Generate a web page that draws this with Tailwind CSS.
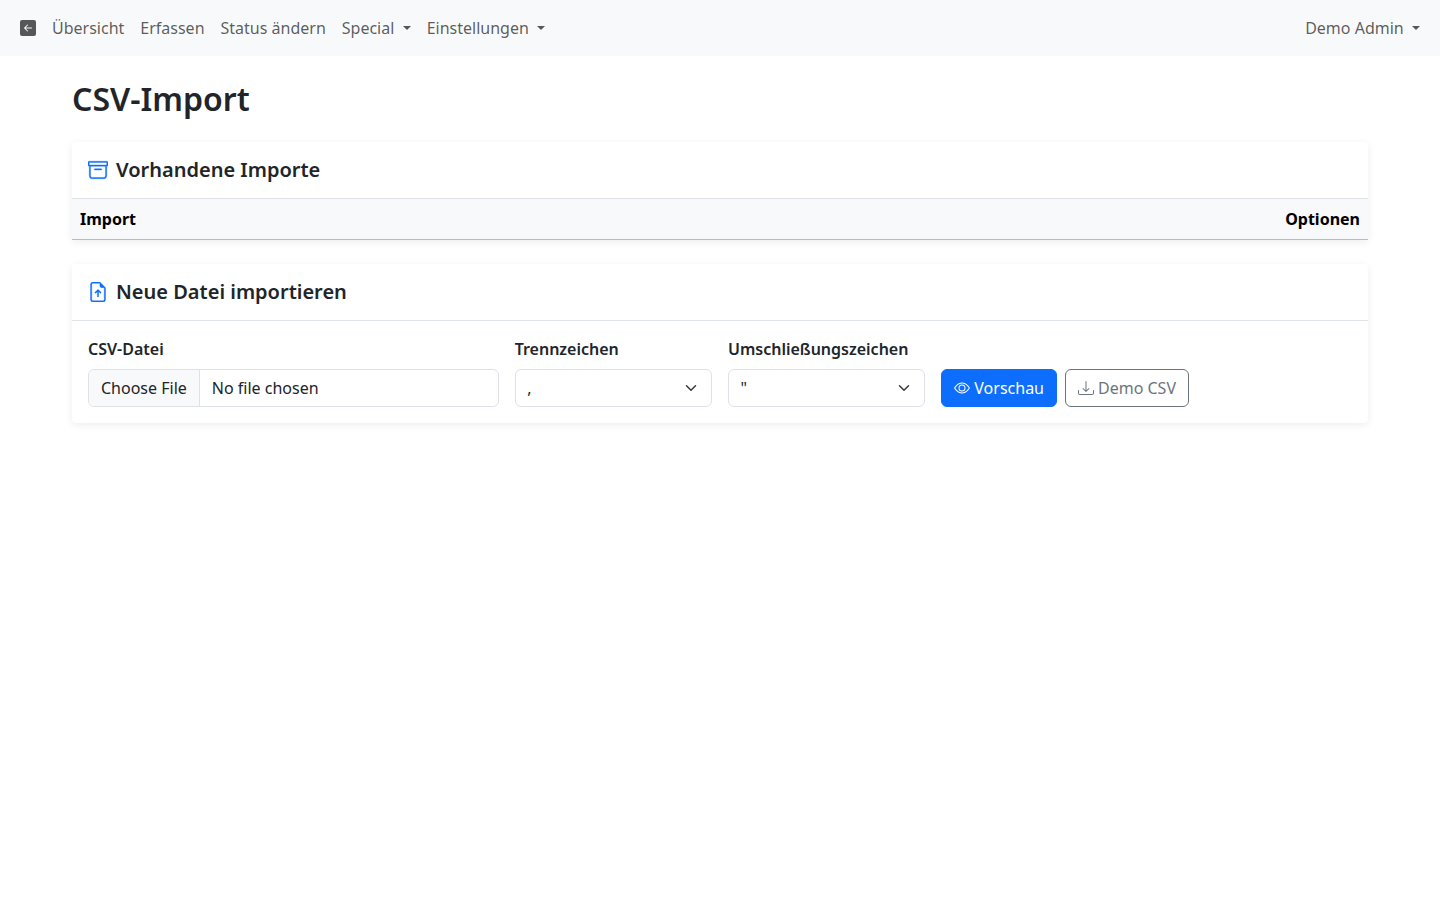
<!DOCTYPE html>
<html lang="de">
<head>
  <meta charset="UTF-8" />
  <meta name="viewport" content="width=device-width, initial-scale=1.0" />
  <title>CSV-Import</title>
  <script src="https://cdn.jsdelivr.net/npm/@tailwindcss/browser@4"></script>
</head>
<body class="bg-white text-[#212529] text-base leading-6 font-['Noto_Sans',sans-serif]">
  <nav class="flex items-center justify-between h-14 px-5 bg-[#f8f9fa] text-black/65">
    <div class="flex items-center">
      <a href="#" class="mr-4">
        <svg class="w-4 h-4" viewBox="0 0 16 16" fill="currentColor"><path d="M16 14a2 2 0 0 1-2 2H2a2 2 0 0 1-2-2V2a2 2 0 0 1 2-2h12a2 2 0 0 1 2 2v12zm-4.5-6.5H5.707l2.147-2.146a.5.5 0 1 0-.708-.708l-3 3a.5.5 0 0 0 0 .708l3 3a.5.5 0 0 0 .708-.708L5.707 8.5H11.5a.5.5 0 0 0 0-1z"/></svg>
      </a>
      <div class="flex items-center gap-4">
        <a href="#">Übersicht</a>
        <a href="#">Erfassen</a>
        <a href="#">Status ändern</a>
        <a href="#" class="flex items-center">Special<span class="ml-[8.3px] border-x-[4.8px] border-t-[4.8px] border-x-transparent border-t-current"></span></a>
        <a href="#" class="flex items-center">Einstellungen<span class="ml-[8.3px] border-x-[4.8px] border-t-[4.8px] border-x-transparent border-t-current"></span></a>
      </div>
    </div>
    <a href="#" class="flex items-center">Demo Admin<span class="ml-[8.3px] border-x-[4.8px] border-t-[4.8px] border-x-transparent border-t-current"></span></a>
  </nav>

  <main class="w-[1296px] mx-auto pb-6">
    <h1 class="mt-6 mb-6 text-[32px] leading-[38px] font-semibold">CSV-Import</h1>

    <section class="rounded-t shadow-[0_2px_8px_rgba(0,0,0,0.075)] mb-6">
      <h5 class="flex items-center gap-2 h-14 px-4 text-xl font-semibold">
        <svg class="w-5 h-5 text-[#0d6efd]" viewBox="0 0 16 16" fill="currentColor" stroke="currentColor" stroke-width="0.3"><path d="M0 2a1 1 0 0 1 1-1h14a1 1 0 0 1 1 1v2a1 1 0 0 1-1 1v7.5a2.5 2.5 0 0 1-2.5 2.5h-9A2.5 2.5 0 0 1 1 12.5V5a1 1 0 0 1-1-1V2zm2 3v7.5A1.5 1.5 0 0 0 3.5 14h9a1.5 1.5 0 0 0 1.5-1.5V5H2zm13-3H1v2h14V2zM5 7.5a.5.5 0 0 1 .5-.5h5a.5.5 0 0 1 0 1h-5a.5.5 0 0 1-.5-.5z"/></svg>
        Vorhandene Importe
      </h5>
      <div class="flex justify-between px-2 py-2 bg-[#f8f9fa] border-t border-[#dee2e6] border-b border-b-[#b8bcc0] font-bold text-black">
        <span>Import</span>
        <span>Optionen</span>
      </div>
    </section>

    <section class="rounded shadow-[0_2px_8px_rgba(0,0,0,0.075)]">
      <h5 class="flex items-center gap-2 h-[57px] px-4 text-xl font-semibold border-b border-[#dee2e6]">
        <svg class="w-5 h-5 text-[#0d6efd]" viewBox="0 0 16 16" fill="currentColor" stroke="currentColor" stroke-width="0.3"><path d="M8.5 11.5a.5.5 0 0 1-1 0V7.707L6.354 8.854a.5.5 0 1 1-.708-.708l2-2a.5.5 0 0 1 .708 0l2 2a.5.5 0 0 1-.708.708L8.5 7.707V11.5z"/><path d="M14 14V4.5L9.5 0H4a2 2 0 0 0-2 2v12a2 2 0 0 0 2 2h8a2 2 0 0 0 2-2zM9.5 3A1.5 1.5 0 0 0 11 4.5h2V14a1 1 0 0 1-1 1H4a1 1 0 0 1-1-1V2a1 1 0 0 1 1-1h5.5v2z"/></svg>
        Neue Datei importieren
      </h5>
      <form class="grid grid-cols-12 gap-4 items-end p-4">
        <div class="col-span-4">
          <label class="block mb-2 font-semibold">CSV-Datei</label>
          <input type="file" class="block w-full h-[38px] border border-[#dee2e6] rounded-md overflow-hidden file:h-[38px] file:-mt-px file:mr-3 file:px-3 file:bg-[#f8f9fa] file:border-0 file:border-r file:border-solid file:border-[#dee2e6] file:text-[#212529]" />
        </div>
        <div class="col-span-2">
          <label class="block mb-2 font-semibold">Trennzeichen</label>
          <div class="relative">
            <select class="block w-full h-[38px] pl-[11.5px] pr-9 border border-[#dee2e6] rounded-md bg-white appearance-none">
              <option>,</option>
            </select>
            <svg class="absolute right-[13px] top-[13px] w-4 h-3 pointer-events-none" viewBox="0 0 16 16" fill="none" stroke="#343a40" stroke-width="2" stroke-linecap="round" stroke-linejoin="round"><path d="m2 5 6 6 6-6"/></svg>
          </div>
        </div>
        <div class="col-span-2">
          <label class="block mb-2 font-semibold">Umschließungszeichen</label>
          <div class="relative">
            <select class="block w-full h-[38px] pl-[11.5px] pr-9 border border-[#dee2e6] rounded-md bg-white appearance-none">
              <option>"</option>
            </select>
            <svg class="absolute right-[13px] top-[13px] w-4 h-3 pointer-events-none" viewBox="0 0 16 16" fill="none" stroke="#343a40" stroke-width="2" stroke-linecap="round" stroke-linejoin="round"><path d="m2 5 6 6 6-6"/></svg>
          </div>
        </div>
        <div class="col-span-4 flex gap-2">
          <button type="button" class="flex items-center gap-1 h-[38px] px-3 bg-[#0d6efd] border border-[#0d6efd] rounded-md text-white">
            <svg class="w-4 h-4" viewBox="0 0 16 16" fill="currentColor"><path d="M16 8s-3-5.5-8-5.5S0 8 0 8s3 5.5 8 5.5S16 8 16 8zM1.173 8a13.133 13.133 0 0 1 1.66-2.043C4.12 4.668 5.88 3.5 8 3.5c2.12 0 3.879 1.168 5.168 2.457A13.133 13.133 0 0 1 14.828 8c-.058.087-.122.183-.195.288-.335.48-.83 1.12-1.465 1.755C11.879 11.332 10.119 12.5 8 12.5c-2.12 0-3.879-1.168-5.168-2.457A13.134 13.134 0 0 1 1.172 8z"/><path d="M8 5.5a2.5 2.5 0 1 0 0 5 2.5 2.5 0 0 0 0-5zM4.5 8a3.5 3.5 0 1 1 7 0 3.5 3.5 0 0 1-7 0z"/></svg>
            Vorschau
          </button>
          <button type="button" class="flex items-center gap-1 h-[38px] px-3 border border-[#6c757d] rounded-md text-[#6c757d]">
            <svg class="w-4 h-4" viewBox="0 0 16 16" fill="currentColor"><path d="M.5 9.9a.5.5 0 0 1 .5.5v2.5a1 1 0 0 0 1 1h12a1 1 0 0 0 1-1v-2.5a.5.5 0 0 1 1 0v2.5a2 2 0 0 1-2 2H2a2 2 0 0 1-2-2v-2.5a.5.5 0 0 1 .5-.5z"/><path d="M7.646 11.854a.5.5 0 0 0 .708 0l3-3a.5.5 0 0 0-.708-.708L8.5 10.293V1.5a.5.5 0 0 0-1 0v8.793L5.354 8.146a.5.5 0 1 0-.708.708l3 3z"/></svg>
            Demo CSV
          </button>
        </div>
      </form>
    </section>
  </main>
</body>
</html>
